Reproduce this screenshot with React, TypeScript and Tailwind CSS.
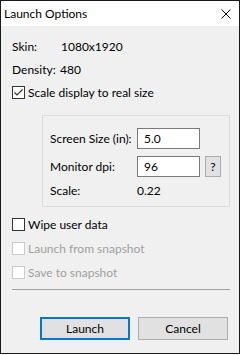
import React from "react";

const font = { fontFamily: 'Lato, "Noto Sans", sans-serif' };

function Check({ checked, disabled, label }: { checked?: boolean; disabled?: boolean; label: string }) {
  return (
    <div className="flex h-[13px] items-center">
      <div
        className={`flex h-[13px] w-[13px] shrink-0 items-center justify-center border bg-white ${
          disabled ? "border-[#cccccc]" : "border-[#333333]"
        }`}
      >
        {checked && (
          <svg width="11" height="11" viewBox="0 0 11 11">
            <path d="M1.5 5.5 L4 8 L9.5 2.5" fill="none" stroke="#333" strokeWidth="1.2" />
          </svg>
        )}
      </div>
      <span className={`ml-[3px] whitespace-nowrap text-[12px] leading-[16px] ${disabled ? "text-[#a0a0a0]" : "text-black"}`}>{label}</span>
    </div>
  );
}

export default function App() {
  return (
    <div className="h-[355px] w-[240px] bg-white" style={font}>
      <div className="flex h-[354px] w-[240px] flex-col border border-[#1a1a1a] bg-[#f0f0f0]">
        <div className="flex h-[25px] shrink-0 items-center justify-between bg-white pl-[3px] pr-[8px]">
          <span className="text-[12px] leading-[16px] text-black">Launch Options</span>
          <svg width="10" height="10" viewBox="0 0 10 10">
            <path d="M0.5 0.5 L9.5 9.5 M9.5 0.5 L0.5 9.5" stroke="#000" strokeWidth="1" />
          </svg>
        </div>
        <div className="flex flex-col whitespace-nowrap px-[11px] text-[12px] leading-[16px] text-black">
          <div className="mt-[13px] flex h-[16px]">
            <span className="w-[49px]">Skin:</span>
            <span>1080x1920</span>
          </div>
          <div className="mt-[7px] flex h-[16px]">
            <span className="w-[48px]">Density:</span>
            <span>480</span>
          </div>
          <div className="mt-[8px]">
            <Check checked label="Scale display to real size" />
          </div>
          <div className="ml-[30px] mt-[16px] flex h-[92px] w-[188px] flex-col border border-[#dcdcdc] pl-[7px]">
            <div className="mt-[12px] flex h-[21px] items-center">
              <span className="w-[87px]">Screen Size (in):</span>
              <div className="flex h-[21px] w-[63px] items-center border border-[#7a7a7a] bg-white pl-[6px]">5.0</div>
            </div>
            <div className="mt-[7px] flex h-[21px] items-center">
              <span className="w-[87px]">Monitor dpi:</span>
              <div className="flex h-[21px] w-[63px] items-center border border-[#7a7a7a] bg-white pl-[6px]">96</div>
              <div className="ml-[5px] flex h-[21px] w-[16px] items-center justify-center border border-[#adadad] bg-[#e1e1e1]">
                ?
              </div>
            </div>
            <div className="mt-[6px] flex h-[16px] items-center">
              <span className="w-[87px]">Scale:</span>
              <span>0.22</span>
            </div>
          </div>
          <div className="mt-[11px] flex flex-col gap-[11px]">
            <Check label="Wipe user data" />
            <Check disabled label="Launch from snapshot" />
            <Check disabled label="Save to snapshot" />
          </div>
          <div className="mt-[10px] h-px w-[218px] bg-[#a0a0a0]" />
          <div className="mt-[27px] flex gap-[8px] pl-[28px]">
            <div className="flex h-[23px] w-[91px] items-center justify-center border-2 border-[#0078d7] bg-[#e1e1e1]">
              Launch
            </div>
            <div className="flex h-[23px] w-[91px] items-center justify-center border border-[#adadad] bg-[#e1e1e1]">
              Cancel
            </div>
          </div>
        </div>
      </div>
    </div>
  );
}
